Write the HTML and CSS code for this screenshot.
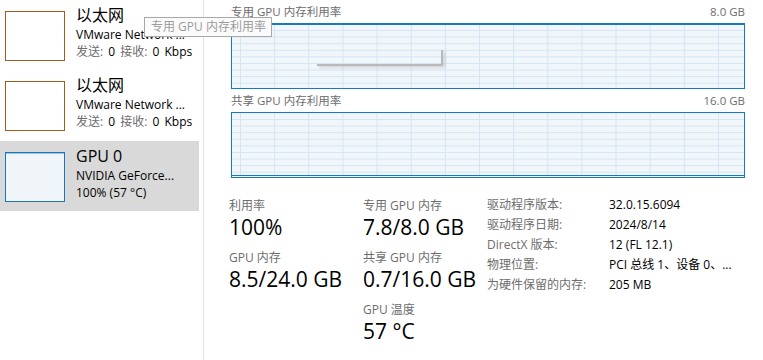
FILE: index.html
```html
<!DOCTYPE html>
<html lang="zh-CN">

<head>
    <meta charset="UTF-8">
    <meta name="viewport" content="width=device-width, initial-scale=1.0">
    <title>任务管理器 - GPU 0</title>
    <link rel="stylesheet" href="styles.css">
</head>

<body>
    <div class="app">
        <div class="sidebar">
            <div class="item">
                <div class="thumb thumb-net"></div>
                <div class="item-text">
                    <div class="item-title">以太网</div>
                    <div class="item-line">VMware Network ...</div>
                    <div class="item-line spaced"><span class="muted">发送:</span> 0 <span class="muted">接收:</span> 0 Kbps</div>
                </div>
            </div>
            <div class="item">
                <div class="thumb thumb-net"></div>
                <div class="item-text">
                    <div class="item-title">以太网</div>
                    <div class="item-line">VMware Network ...</div>
                    <div class="item-line spaced"><span class="muted">发送:</span> 0 <span class="muted">接收:</span> 0 Kbps</div>
                </div>
            </div>
            <div class="item selected">
                <div class="thumb thumb-gpu"></div>
                <div class="item-text">
                    <div class="item-title">GPU 0</div>
                    <div class="item-line">NVIDIA GeForce...</div>
                    <div class="item-line">100% (57 °C)</div>
                </div>
            </div>
        </div>

        <div class="main">
            <div class="graph-head first">
                <span>专用 GPU 内存利用率</span>
                <span>8.0 GB</span>
            </div>
            <div class="graph graph-full">
                <div class="ghost"></div>
            </div>

            <div class="graph-head">
                <span>共享 GPU 内存利用率</span>
                <span>16.0 GB</span>
            </div>
            <div class="graph">
                <div class="usage"></div>
            </div>

            <div class="stats">
                <div class="col col-1">
                    <div class="stat-label">利用率</div>
                    <div class="stat-value">100%</div>
                    <div class="stat-label">GPU 内存</div>
                    <div class="stat-value">8.5/24.0 GB</div>
                </div>
                <div class="col col-2">
                    <div class="stat-label">专用 GPU 内存</div>
                    <div class="stat-value">7.8/8.0 GB</div>
                    <div class="stat-label">共享 GPU 内存</div>
                    <div class="stat-value">0.7/16.0 GB</div>
                    <div class="stat-label">GPU 温度</div>
                    <div class="stat-value">57 °C</div>
                </div>
                <div class="info">
                    <span class="muted">驱动程序版本:</span><span>32.0.15.6094</span>
                    <span class="muted">驱动程序日期:</span><span>2024/8/14</span>
                    <span class="muted">DirectX 版本:</span><span>12 (FL 12.1)</span>
                    <span class="muted">物理位置:</span><span>PCI 总线 1、设备 0、...</span>
                    <span class="muted">为硬件保留的内存:</span><span>205 MB</span>
                </div>
            </div>
        </div>
    </div>

    <div class="tooltip">专用 GPU 内存利用率</div>
</body>

</html>
```

FILE: styles.css
```css
body {
    margin: 0;
    font-family: "Open Sans", "Noto Sans CJK SC", sans-serif;
    background-color: #FFF;
    color: #000;
    overflow: hidden;
}

.app {
    display: flex;
    height: 360px;
}

.muted {
    color: #6d6d6d;
}

/* sidebar */

.sidebar {
    width: 199px;
    padding-right: 4px;
    border-right: 1px solid #e3e3e3;
}

.item {
    display: flex;
    gap: 11px;
    height: 70px;
    box-sizing: border-box;
    padding: 11px 0 0 5px;
}

.item.selected {
    margin-top: 1px;
    background-color: #d9d9d9;
}

.thumb {
    width: 60px;
    height: 50px;
    box-sizing: border-box;
    flex-shrink: 0;
}

.thumb-net {
    border: 1px solid #a65a1e;
    background-color: #FFF;
}

.thumb-gpu {
    border: 1px solid #1c76bd;
    background-color: #f0f5fa;
    box-shadow: inset 0 1px 0 #9cc3e3;
}

.item-text {
    margin-top: -7px;
    white-space: nowrap;
}

.item-title {
    font-size: 16px;
    line-height: 22px;
}

.item-line {
    font-size: 12px;
    line-height: 17px;
}

.item-line.spaced {
    word-spacing: 2px;
}

/* graphs */

.main {
    flex: 1;
    padding: 4px 0 0 25px;
}

.graph-head {
    display: flex;
    justify-content: space-between;
    width: 514px;
    margin: 4px 0 3px 2px;
    font-size: 11.5px;
    line-height: 16px;
    color: #6d6d6d;
}

.graph-head.first {
    margin-top: 0;
}

.graph {
    position: relative;
    width: 514px;
    height: 66px;
    margin-left: 2px;
    box-sizing: border-box;
    border: 1px solid #1a78c2;
    background-color: #f1f6fb;
    background-image:
        linear-gradient(to right, #d3e5f3 1px, transparent 1px),
        linear-gradient(to bottom, #d3e5f3 1px, transparent 1px);
    background-size: 34.15px 100%, 100% 6.6px;
    background-position: 8px 0, 0 6px;
}

.graph-full {
    box-shadow: inset 0 1px 0 #1a78c2;
}

.usage {
    position: absolute;
    left: 0;
    right: 0;
    bottom: 0;
    height: 1px;
    border-top: 1px solid #1a78c2;
    background-color: #f1f6fb;
}

.ghost {
    position: absolute;
    left: 85px;
    top: 26px;
    width: 124px;
    height: 14px;
    border-right: 2px solid #b9b9b9;
    border-bottom: 2px solid #b9b9b9;
    box-shadow: 2px 2px 3px rgba(0, 0, 0, 0.12);
}

/* stats */

.stats {
    display: flex;
    margin-top: 20px;
}

.col-1 {
    width: 134px;
}

.col-2 {
    width: 124px;
}

.stat-label {
    font-size: 12px;
    line-height: 16px;
    color: #6d6d6d;
}

.stat-value {
    font-size: 21px;
    line-height: 26px;
    margin-bottom: 10px;
}

.info {
    display: grid;
    grid-template-columns: 122px auto;
    align-content: start;
    margin-top: -3px;
    font-size: 12px;
    line-height: 20px;
    white-space: nowrap;
}

/* tooltip left over from hover */

.tooltip {
    position: absolute;
    left: 144px;
    top: 17px;
    width: 128px;
    height: 20px;
    padding-left: 6px;
    box-sizing: border-box;
    border: 1px solid #a8a8a8;
    background-color: #fbfbfb;
    color: #9b9b9b;
    font-size: 12px;
    line-height: 18px;
    white-space: nowrap;
}
```
